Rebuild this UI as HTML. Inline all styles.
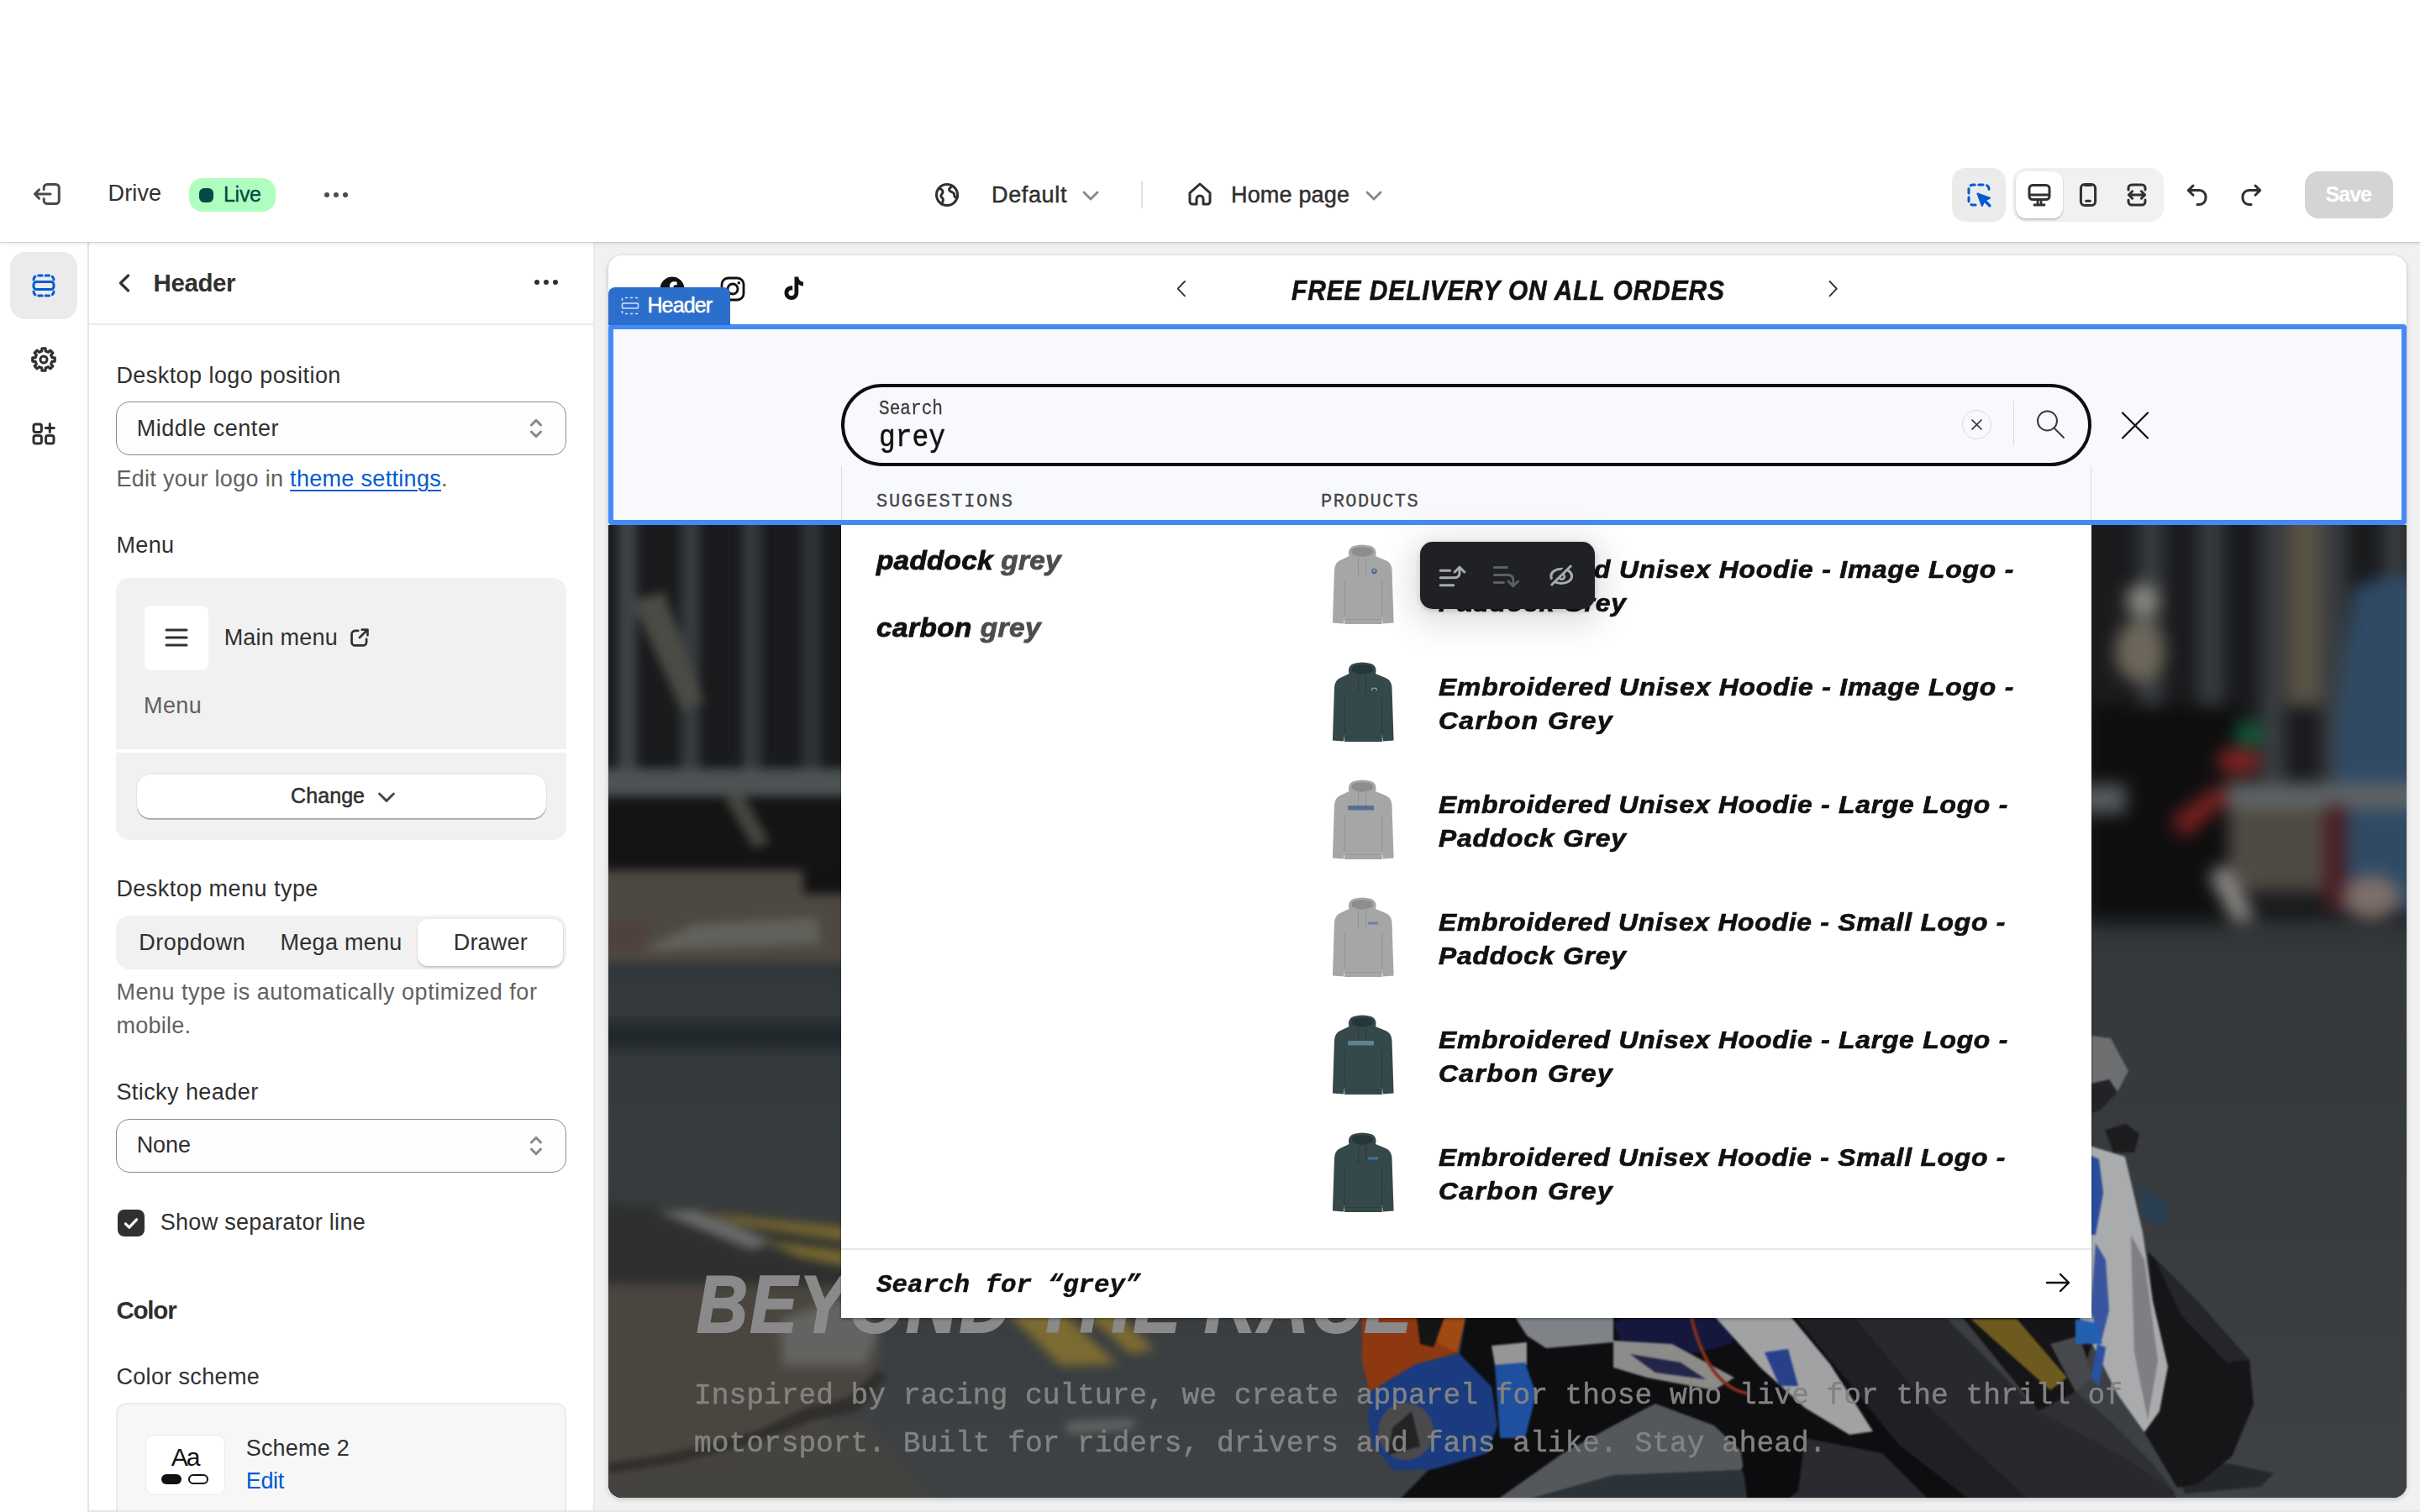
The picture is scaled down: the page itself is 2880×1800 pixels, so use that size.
<!DOCTYPE html>
<html lang="en"><head><meta charset="utf-8"><title>Header · Drive · Theme editor</title>
<style>
html,body{margin:0;padding:0}
body{width:2880px;height:1800px;position:relative;overflow:hidden;background:#fff;font-family:"Liberation Sans",sans-serif;color:#303030}
.t{position:absolute;white-space:nowrap;display:block}
div{box-sizing:border-box}
</style></head><body>
<div style="position:absolute;left:708px;top:288px;width:2172px;height:1512px;background:#f1f1f1;"></div>
<div style="position:absolute;left:0px;top:0px;width:2880px;height:288px;background:#fff;box-shadow:0 2px 4px rgba(0,0,0,.11), 0 1px 0 rgba(0,0,0,.09);z-index:5;"></div>
<div style="position:absolute;left:0;top:0;width:2880px;height:288px;z-index:6"><svg style="position:absolute;left:36px;top:211px;" width="40" height="40" viewBox="0 0 20 20" fill="none"><path d="M8.100 7.200V6.250a2 2 0 0 1 2-2h5.050a2 2 0 0 1 2 2v7.500a2 2 0 0 1-2 2H10.100a2 2 0 0 1-2-2v-.950" stroke="#4a4a4a" stroke-width="1.500" stroke-linecap="round"/><path d="M12 10H2.900M5.300 7.400 2.700 10l2.600 2.600" stroke="#4a4a4a" stroke-width="1.500" stroke-linecap="round" stroke-linejoin="round"/></svg>
<span class="t" style="left:128.6px;top:216.9px;font-size:27px;line-height:27px;color:#303030;letter-spacing:0.10px;">Drive</span>
<div style="position:absolute;left:225px;top:212px;width:103px;height:40px;background:#affebf;border-radius:16px;"></div>
<div style="position:absolute;left:237px;top:223.5px;width:17px;height:17px;background:#014b40;border-radius:6px;"></div>
<span class="t" style="left:266.0px;top:218.6px;font-size:25px;line-height:25px;color:#014b40;letter-spacing:-0.29px;-webkit-text-stroke:0.3px #014b40;">Live</span>
<div style="position:absolute;left:385.8px;top:228.8px;width:6px;height:6px;background:#4a4a4a;border-radius:50%;"></div>
<div style="position:absolute;left:396.8px;top:228.8px;width:6px;height:6px;background:#4a4a4a;border-radius:50%;"></div>
<div style="position:absolute;left:407.8px;top:228.8px;width:6px;height:6px;background:#4a4a4a;border-radius:50%;"></div>
<svg style="position:absolute;left:1107px;top:212px;" width="40" height="40" viewBox="0 0 20 20" fill="none"><circle cx="10" cy="10" r="6.25" stroke="#303030" stroke-width="1.5"/><path d="M5.2 6.2c1 .2 2.300.9 2.300 2 0 1.200-1.100 1.300-1.100 2.400 0 1 1.300 1.200 1.300 2.300 0 .9-.5 1.700-.9 2.600M13.200 4.700c-.7.800-1.900 1.100-1.900 2.200 0 1.300 1.800 1.100 2.600 2 .7.800.1 1.900 1 2.400.5.300 1 .2 1.300 0" stroke="#303030" stroke-width="1.5" stroke-linecap="round" stroke-linejoin="round"/></svg>
<span class="t" style="left:1180.0px;top:218.9px;font-size:27px;line-height:27px;color:#303030;letter-spacing:0.64px;-webkit-text-stroke:0.5px #303030;">Default</span>
<svg style="position:absolute;left:1278px;top:212px;" width="40" height="40" viewBox="0 0 20 20" fill="none"><path d="M6 8.500l4 4 4-4" stroke="#8a8a8a" stroke-width="1.500" stroke-linecap="round" stroke-linejoin="round"/></svg>
<div style="position:absolute;left:1358px;top:216px;width:2px;height:32px;background:#e3e3e3;"></div>
<svg style="position:absolute;left:1408px;top:211px;" width="40" height="40" viewBox="0 0 20 20" fill="none"><path d="M4 9.300 10 4l6 5.300v5.200a1.500 1.500 0 0 1-1.500 1.500H12v-3a2 2 0 0 0-4 0v3H5.500A1.500 1.500 0 0 1 4 14.500z" stroke="#303030" stroke-width="1.500" stroke-linejoin="round"/></svg>
<span class="t" style="left:1465.0px;top:218.9px;font-size:27px;line-height:27px;color:#303030;letter-spacing:0.18px;-webkit-text-stroke:0.5px #303030;">Home page</span>
<svg style="position:absolute;left:1615px;top:212px;" width="40" height="40" viewBox="0 0 20 20" fill="none"><path d="M6 8.500l4 4 4-4" stroke="#8a8a8a" stroke-width="1.500" stroke-linecap="round" stroke-linejoin="round"/></svg>
<div style="position:absolute;left:2323px;top:200px;width:64px;height:64px;background:#ebebeb;border-radius:16px;"></div>
<svg style="position:absolute;left:2335px;top:212px;" width="40" height="40" viewBox="0 0 20 20" fill="none"><path d="M8 16H6.500A2.500 2.500 0 0 1 4 13.500V6.500A2.500 2.500 0 0 1 6.500 4h7A2.500 2.500 0 0 1 16 6.500V8" stroke="#005bd3" stroke-width="1.500" stroke-linecap="round" stroke-dasharray="2.600 2.300"/><path d="M9.200 9.200l7.300 2.700-3.100 1.500-1.500 3.100z" fill="#005bd3" stroke="#005bd3" stroke-width="1" stroke-linejoin="round"/><path d="M13.400 13.400l3 3" stroke="#005bd3" stroke-width="1.800" stroke-linecap="round"/></svg>
<div style="position:absolute;left:2395px;top:200px;width:180px;height:64px;background:#f1f1f1;border-radius:16px;"></div>
<div style="position:absolute;left:2399px;top:204px;width:56px;height:56px;background:#fff;border-radius:12px;box-shadow:0 2px 2px rgba(0,0,0,.18),0 0 0 1px rgba(0,0,0,.03);"></div>
<svg style="position:absolute;left:2407px;top:212px;" width="40" height="40" viewBox="0 0 20 20" fill="none"><rect x="4" y="4.250" width="12" height="8.500" rx="2" stroke="#303030" stroke-width="1.500"/><path d="M4.300 10h11.400M7 16h6M9 13v3M11 13v3" stroke="#303030" stroke-width="1.400" stroke-linecap="round"/></svg>
<svg style="position:absolute;left:2465px;top:212px;" width="40" height="40" viewBox="0 0 20 20" fill="none"><rect x="5.700" y="3.750" width="8.600" height="12.500" rx="2.200" stroke="#303030" stroke-width="1.500"/><path d="M8.800 13.600h2.400M8.300 4.300h3.400" stroke="#303030" stroke-width="1.500" stroke-linecap="round"/></svg>
<svg style="position:absolute;left:2523px;top:212px;" width="40" height="40" viewBox="0 0 20 20" fill="none"><path d="M5 7V6a2 2 0 0 1 2-2h6a2 2 0 0 1 2 2v1M5 13v1a2 2 0 0 0 2 2h6a2 2 0 0 0 2-2v-1" stroke="#303030" stroke-width="1.500" stroke-linecap="round"/><path d="M5.200 10h9.600M7.300 7.900 5.200 10l2.100 2.100M12.700 7.900l2.100 2.100-2.100 2.100" stroke="#303030" stroke-width="1.500" stroke-linecap="round" stroke-linejoin="round"/></svg>
<svg style="position:absolute;left:2595px;top:212px;" width="40" height="40" viewBox="0 0 20 20" fill="none"><path d="M7.500 4.500 4.700 7.300l2.800 2.800" stroke="#303030" stroke-width="1.500" stroke-linecap="round" stroke-linejoin="round"/><path d="M5 7.300h6.300a3.700 3.700 0 0 1 3.700 3.700v1a3.700 3.700 0 0 1-3.700 3.700h-1.300" stroke="#303030" stroke-width="1.500" stroke-linecap="round"/></svg>
<svg style="position:absolute;left:2659px;top:212px;" width="40" height="40" viewBox="0 0 20 20" fill="none"><path d="M12.500 4.500l2.800 2.800-2.800 2.800" stroke="#303030" stroke-width="1.500" stroke-linecap="round" stroke-linejoin="round"/><path d="M15 7.300H8.700a3.700 3.700 0 0 0-3.700 3.700v1a3.700 3.700 0 0 0 3.700 3.700h1.300" stroke="#303030" stroke-width="1.500" stroke-linecap="round"/></svg>
<div style="position:absolute;left:2743px;top:204px;width:105px;height:56px;background:#d4d4d4;border-radius:16px;"></div>
<span class="t" style="left:2767.6px;top:218.6px;font-size:25px;line-height:25px;color:#fff;font-weight:700;letter-spacing:-1.00px;">Save</span>
</div>
<div style="position:absolute;left:0px;top:288px;width:106px;height:1512px;background:#fff;border-right:2px solid #e6e6e6;"></div>
<div style="position:absolute;left:12px;top:300px;width:80px;height:80px;background:#ebebeb;border-radius:18px;"></div>
<svg style="position:absolute;left:32px;top:320px;" width="40" height="40" viewBox="0 0 20 20" fill="none"><rect x="4" y="7.750" width="12" height="4.500" rx="1.600" stroke="#005bd3" stroke-width="1.500"/><path d="M4 6.500A2.500 2.500 0 0 1 6.500 4h7A2.500 2.500 0 0 1 16 6.500M4 13.500A2.500 2.500 0 0 0 6.500 16h7a2.500 2.500 0 0 0 2.500-2.500" stroke="#005bd3" stroke-width="1.500" stroke-linecap="round" stroke-dasharray="2.200 2"/></svg>
<svg style="position:absolute;left:32px;top:408px;" width="40" height="40" viewBox="0 0 20 20" fill="none"><path d="M8.95 3.38 L11.05 3.38 L11.15 5.03 L12.70 5.67 L13.94 4.58 L15.42 6.06 L14.33 7.30 L14.97 8.85 L16.62 8.95 L16.62 11.05 L14.97 11.15 L14.33 12.70 L15.42 13.94 L13.94 15.42 L12.70 14.33 L11.15 14.97 L11.05 16.62 L8.95 16.62 L8.85 14.97 L7.30 14.33 L6.06 15.42 L4.58 13.94 L5.67 12.70 L5.03 11.15 L3.38 11.05 L3.38 8.95 L5.03 8.85 L5.67 7.30 L4.58 6.06 L6.06 4.58 L7.30 5.67 L8.85 5.03Z" stroke="#303030" stroke-width="1.600" stroke-linejoin="round"/><circle cx="10" cy="10" r="2" stroke="#303030" stroke-width="1.500"/></svg>
<svg style="position:absolute;left:32px;top:496px;" width="40" height="40" viewBox="0 0 20 20" fill="none"><rect x="4" y="4.500" width="4.700" height="4.700" rx="1.200" stroke="#303030" stroke-width="1.500"/><rect x="4" y="11.300" width="4.700" height="4.700" rx="1.200" stroke="#303030" stroke-width="1.500"/><rect x="11.300" y="11.300" width="4.700" height="4.700" rx="1.200" stroke="#303030" stroke-width="1.500"/><path d="M13.650 4.300v5M11.150 6.800h5" stroke="#303030" stroke-width="1.500" stroke-linecap="round"/></svg>
<div style="position:absolute;left:106px;top:288px;width:602px;height:1512px;background:#fff;border-right:2px solid #e9e9e9;"></div>
<div style="position:absolute;left:106px;top:385px;width:600px;height:2px;background:#ebebeb;"></div>
<svg style="position:absolute;left:128px;top:317px;" width="40" height="40" viewBox="0 0 20 20" fill="none"><path d="M12.300 5.500 7.700 10l4.600 4.500" stroke="#303030" stroke-width="1.600" stroke-linecap="round" stroke-linejoin="round"/></svg>
<span class="t" style="left:182.5px;top:322.0px;font-size:29.5px;line-height:29.5px;color:#303030;font-weight:700;letter-spacing:-0.40px;">Header</span>
<div style="position:absolute;left:636px;top:333px;width:6px;height:6px;background:#303030;border-radius:50%;"></div>
<div style="position:absolute;left:647px;top:333px;width:6px;height:6px;background:#303030;border-radius:50%;"></div>
<div style="position:absolute;left:658px;top:333px;width:6px;height:6px;background:#303030;border-radius:50%;"></div>
<span class="t" style="left:138.4px;top:433.9px;font-size:27px;line-height:27px;color:#303030;letter-spacing:0.44px;">Desktop logo position</span>
<div style="position:absolute;left:138px;top:478px;width:536px;height:64px;background:#fdfdfd;border:1.500px solid #8a8a8a;border-radius:16px;"></div>
<span class="t" style="left:162.7px;top:496.9px;font-size:27px;line-height:27px;color:#303030;letter-spacing:0.56px;">Middle center</span>
<svg style="position:absolute;left:618px;top:490px;" width="40" height="40" viewBox="0 0 20 20" fill="none"><path d="M7.200 8 10 5.200 12.800 8M7.200 12l2.800 2.800L12.800 12" stroke="#8a8a8a" stroke-width="1.500" stroke-linecap="round" stroke-linejoin="round"/></svg>
<span class="t" style="left:138.4px;top:556.9px;font-size:27px;line-height:27px;color:#616161;letter-spacing:0.31px;">Edit your logo in <span style="color:#005bd3;text-decoration:underline;text-decoration-thickness:2px;text-underline-offset:4px">theme settings</span>.</span>
<span class="t" style="left:138.4px;top:635.9px;font-size:27px;line-height:27px;color:#303030;letter-spacing:0.39px;">Menu</span>
<div style="position:absolute;left:138px;top:688px;width:536px;height:312px;background:#f1f1f1;border-radius:16px;"></div>
<div style="position:absolute;left:138px;top:892px;width:536px;height:4px;background:#fff;"></div>
<div style="position:absolute;left:172px;top:721px;width:76px;height:77px;background:#fff;border-radius:8px;"></div>
<svg style="position:absolute;left:190px;top:739px;" width="40" height="40" viewBox="0 0 20 20" fill="none"><path d="M4 5.500h12M4 10h12M4 14.500h12" stroke="#303030" stroke-width="1.500" stroke-linecap="round"/></svg>
<span class="t" style="left:266.7px;top:746.4px;font-size:27px;line-height:27px;color:#303030;letter-spacing:0.18px;">Main menu</span>
<svg style="position:absolute;left:410px;top:741px;" width="36" height="36" viewBox="0 0 20 20" fill="none"><path d="M9 5.500H7A2.250 2.250 0 0 0 4.750 7.750V13A2.250 2.250 0 0 0 7 15.250h5.250A2.250 2.250 0 0 0 14.500 13v-2" stroke="#303030" stroke-width="1.500" stroke-linecap="round"/><path d="M11.500 4.750h3.750V8.500M15 5l-5 5" stroke="#303030" stroke-width="1.500" stroke-linecap="round" stroke-linejoin="round"/></svg>
<span class="t" style="left:171.0px;top:827.2px;font-size:27px;line-height:27px;color:#616161;letter-spacing:0.39px;">Menu</span>
<div style="position:absolute;left:163px;top:922px;width:487px;height:52px;background:#fff;border-radius:16px;box-shadow:0 2px 0 0 rgba(0,0,0,.25),0 0 0 1px rgba(0,0,0,.05);"></div>
<span class="t" style="left:346.0px;top:934.6px;font-size:25px;line-height:25px;color:#303030;letter-spacing:0.09px;-webkit-text-stroke:0.5px #303030;">Change</span>
<svg style="position:absolute;left:439.5px;top:928px;" width="40" height="40" viewBox="0 0 20 20" fill="none"><path d="M5.800 8.500l4.200 4.200 4.200-4.200" stroke="#4a4a4a" stroke-width="1.500" stroke-linecap="round" stroke-linejoin="round"/></svg>
<span class="t" style="left:138.4px;top:1044.9px;font-size:27px;line-height:27px;color:#303030;letter-spacing:0.46px;">Desktop menu type</span>
<div style="position:absolute;left:138px;top:1090px;width:536px;height:64px;background:#f1f1f1;border-radius:16px;"></div>
<div style="position:absolute;left:497px;top:1094px;width:173px;height:56px;background:#fff;border-radius:12px;box-shadow:0 2px 2px rgba(0,0,0,.16),0 0 0 1px rgba(0,0,0,.03);"></div>
<span class="t" style="left:165.3px;top:1109.2px;font-size:27px;line-height:27px;color:#303030;letter-spacing:0.49px;">Dropdown</span>
<span class="t" style="left:333.6px;top:1109.2px;font-size:27px;line-height:27px;color:#303030;letter-spacing:0.26px;">Mega menu</span>
<span class="t" style="left:539.7px;top:1109.2px;font-size:27px;line-height:27px;color:#303030;letter-spacing:0.20px;">Drawer</span>
<span class="t" style="left:138.4px;top:1168.2px;font-size:27px;line-height:27px;color:#616161;letter-spacing:0.52px;">Menu type is automatically optimized for</span>
<span class="t" style="left:138.4px;top:1208.4px;font-size:27px;line-height:27px;color:#616161;letter-spacing:0.26px;">mobile.</span>
<span class="t" style="left:138.4px;top:1287.2px;font-size:27px;line-height:27px;color:#303030;letter-spacing:0.43px;">Sticky header</span>
<div style="position:absolute;left:138px;top:1332px;width:536px;height:64px;background:#fdfdfd;border:1.500px solid #8a8a8a;border-radius:16px;"></div>
<span class="t" style="left:162.7px;top:1350.2px;font-size:27px;line-height:27px;color:#303030;letter-spacing:-0.08px;">None</span>
<svg style="position:absolute;left:618px;top:1344px;" width="40" height="40" viewBox="0 0 20 20" fill="none"><path d="M7.200 8 10 5.200 12.800 8M7.200 12l2.800 2.800L12.800 12" stroke="#8a8a8a" stroke-width="1.500" stroke-linecap="round" stroke-linejoin="round"/></svg>
<div style="position:absolute;left:140px;top:1440px;width:32px;height:32px;background:#303030;border-radius:8px;"></div>
<svg style="position:absolute;left:140px;top:1440px;" width="32" height="32" viewBox="0 0 16 16" fill="none"><path d="M4.700 8.400l2.200 2.200 4.400-4.700" stroke="#fff" stroke-width="1.600" stroke-linecap="round" stroke-linejoin="round"/></svg>
<span class="t" style="left:190.7px;top:1441.9px;font-size:27px;line-height:27px;color:#303030;letter-spacing:0.30px;">Show separator line</span>
<span class="t" style="left:138.4px;top:1544.7px;font-size:29.5px;line-height:29.5px;color:#303030;font-weight:700;letter-spacing:-1.18px;">Color</span>
<span class="t" style="left:138.4px;top:1625.9px;font-size:27px;line-height:27px;color:#303030;letter-spacing:0.35px;">Color scheme</span>
<div style="position:absolute;left:138px;top:1670px;width:536px;height:140px;background:#f7f7f7;border:2px solid #ebebeb;border-radius:12px;"></div>
<div style="position:absolute;left:174px;top:1709px;width:93px;height:70px;background:#fff;border-radius:9px;box-shadow:0 0 0 1px #ebebeb;"></div>
<span class="t" style="left:203.8px;top:1719.8px;font-size:30px;line-height:30px;color:#111;letter-spacing:-2.09px;">Aa</span>
<div style="position:absolute;left:192px;top:1755px;width:24px;height:12px;background:#111;border-radius:6px;"></div>
<div style="position:absolute;left:224px;top:1755px;width:24px;height:12px;background:#fff;border:2px solid #111;border-radius:6px;"></div>
<span class="t" style="left:292.7px;top:1710.5px;font-size:27px;line-height:27px;color:#303030;letter-spacing:0.20px;">Scheme 2</span>
<span class="t" style="left:292.7px;top:1750.3px;font-size:27px;line-height:27px;color:#005bd3;letter-spacing:-0.31px;">Edit</span>
<div style="position:absolute;left:106px;top:1797.5px;width:2774px;height:2.5px;background:#e6e6e6;"></div>
<div style="position:absolute;left:724px;top:304px;width:2140px;height:1479px;background:#fff;border-radius:16px;overflow:hidden;box-shadow:0 2px 6px rgba(0,0,0,.18),0 0 3px rgba(0,0,0,.06);"><svg style="position:absolute;left:61px;top:25px;" width="30" height="30" viewBox="0 0 30 30" fill="none"><circle cx="15" cy="15" r="14.500" fill="#111"/><path d="M19.800 19.400l.650-4.200h-4v-2.700c0-1.150.560-2.270 2.370-2.270h1.830V6.650s-1.660-.280-3.250-.280c-3.320 0-5.480 2-5.480 5.650v3.200H8.200v4.200h3.700v10h4.550v-10z" fill="#fff"/></svg>
<svg style="position:absolute;left:133px;top:25px;" width="30" height="30" viewBox="0 0 30 30" fill="none"><rect x="2" y="2" width="26" height="26" rx="7.500" stroke="#111" stroke-width="2.800"/><circle cx="15" cy="15" r="6" stroke="#111" stroke-width="2.800"/><circle cx="22.300" cy="7.700" r="1.800" fill="#111"/></svg>
<svg style="position:absolute;left:206px;top:24px;" width="30" height="32" viewBox="0 0 30 32" fill="none"><path d="M15.500 1.500h4.700c.2 3.300 2.300 5.900 5.800 6.300v4.700c-2.200 0-4.200-.7-5.800-1.900v9.900c0 5.200-3.900 8.500-8.300 8.500-4.900 0-8.400-3.900-8.400-8.300 0-5.300 4.600-9.100 9.700-8.200v4.900c-2.500-.8-4.900 1-4.900 3.400 0 2 1.600 3.500 3.500 3.500 2.200 0 3.700-1.700 3.700-3.800z" fill="#111"/></svg>
<svg style="position:absolute;left:672px;top:28px;" width="20" height="24" viewBox="0 0 20 24" fill="none"><path d="M14 3 5.700 11.700l8.300 8.700" stroke="#333" stroke-width="1.900" stroke-linecap="round" stroke-linejoin="round"/></svg>
<svg style="position:absolute;left:1447px;top:28px;" width="20" height="24" viewBox="0 0 20 24" fill="none"><path d="M6.500 3l8.300 8.700-8.300 8.700" stroke="#333" stroke-width="1.900" stroke-linecap="round" stroke-linejoin="round"/></svg>
<span class="t" style="left:813.0px;top:24.2px;font-size:34px;line-height:34px;color:#111;font-weight:700;font-style:italic;letter-spacing:1.05px;-webkit-text-stroke:0.6px #111;transform:scaleX(0.88);transform-origin:0 0;">FREE DELIVERY ON ALL ORDERS</span>
<div style="position:absolute;left:0px;top:82px;width:2140px;height:239px;background:#f8f9fc;"></div>
<div style="position:absolute;left:0px;top:321px;width:2140px;height:1158px;overflow:hidden;background:#222;"><svg style="position:absolute;left:0;top:0" width="2140" height="1158" viewBox="0 0 2140 1158"><defs>
<filter id="b10" color-interpolation-filters="sRGB" x="-30%" y="-30%" width="160%" height="160%"><feGaussianBlur stdDeviation="10"/></filter>
<filter id="b6" color-interpolation-filters="sRGB" x="-30%" y="-30%" width="160%" height="160%"><feGaussianBlur stdDeviation="6"/></filter>
<filter id="b3" color-interpolation-filters="sRGB" x="-30%" y="-30%" width="160%" height="160%"><feGaussianBlur stdDeviation="3"/></filter>
<filter id="b1" color-interpolation-filters="sRGB" x="-10%" y="-10%" width="120%" height="120%"><feGaussianBlur stdDeviation="1.200"/></filter>
<linearGradient id="road" x1="0" y1="0" x2="0" y2="1"><stop offset="0" stop-color="#33383a"/><stop offset=".45" stop-color="#383c3e"/><stop offset="1" stop-color="#404446"/></linearGradient>
</defs><rect width="2140" height="1158" fill="#1a1b1d"/><g filter="url(#b6)"><rect x="-100" y="475" width="2340" height="800" fill="url(#road)" /></g><g filter="url(#b6)"><rect x="11" y="-25" width="23" height="318" fill="#3d4245" /><rect x="86" y="-25" width="23" height="318" fill="#363b3e" /><rect x="159" y="-25" width="23" height="318" fill="#34393c" /><rect x="230" y="-25" width="23" height="318" fill="#2f3338" /><polygon points="28,90 66,80 114,210 88,223" fill="#4a4b45" /><rect x="-24" y="290" width="320" height="33" fill="#4d5254" /><rect x="-24" y="323" width="320" height="90" fill="#141414" /><polygon points="138,325 161,321 192,378 173,385" fill="#45453f" /><rect x="-24" y="411" width="320" height="110" fill="#4d4840" /><rect x="232" y="405" width="60" height="34" fill="#131313" /><polygon points="103,475 248,467 252,499 36,507" fill="#61615b" /><rect x="-24" y="471" width="70" height="36" fill="#4f423c" /><rect x="-24" y="521" width="340" height="20" fill="#30363a" /></g><g filter="url(#b10)"><rect x="-34" y="593" width="360" height="30" fill="#1f262a" /></g><g filter="url(#b6)"><polygon points="-24,807 76,811 296,837 336,915 -24,915" fill="#2d302f" /><polygon points="-24,903 274,906 325,981 321,1013 266,1065 202,1090 276,1175 -24,1175" fill="#4a463f" /><polygon points="-24,1135 136,1105 236,1075 306,1065 396,1175 -24,1175" fill="#45433f" /><polygon points="56,816 106,816 196,853 171,863" fill="#6a6a6a" /><polygon points="116,819 286,837 286,853 156,833" fill="#7a6a30" /><polygon points="181,851 286,865 286,883 226,871" fill="#7a6a30" /><polygon points="204,947 276,921 322,961 306,1001 208,1001" fill="#636361" /><polygon points="472,935 538,935 606,999 538,1001" fill="#7c6b32" /><polygon points="562,935 602,935 650,981 622,987" fill="#7c6b32" /><polygon points="546,1069 626,1065 626,1075 546,1081" fill="#6a6c6c" /></g><g filter="url(#b3)"><polygon points="0,1117 76,1105 176,1079 236,1051 286,1039 322,1005 332,1015 296,1055 241,1067 181,1091 76,1118 0,1129" fill="#302f2c" /></g><g filter="url(#b10)"><rect x="1822" y="-25" width="28" height="330" fill="#3a3e41" /><rect x="1893" y="-25" width="28" height="330" fill="#3a3e41" /><rect x="1967" y="-25" width="28" height="330" fill="#3a3e41" /><rect x="2039" y="-25" width="28" height="330" fill="#3a3e41" /><rect x="2113" y="-25" width="28" height="330" fill="#3a3e41" /><rect x="1998" y="-25" width="40" height="240" fill="#5a5446" /><ellipse cx="1826" cy="90" rx="20" ry="20" fill="#85877f" /><ellipse cx="1823" cy="150" rx="30" ry="38" fill="#6d675b" /><polygon points="2076,75 2116,60 2156,65 2156,460 2051,460 2056,235" fill="#304a64" /><rect x="1765" y="215" width="176" height="258" fill="#0e0e0f" /><rect x="1928" y="338" width="123" height="98" fill="#4f4a42" /><rect x="1924" y="307" width="240" height="31" fill="#5f6466" /><rect x="1746" y="309" width="60" height="34" fill="#585c5e" /><ellipse cx="1952" cy="249" rx="17" ry="15" fill="#0f5a3a" /><ellipse cx="1940" cy="281" rx="26" ry="17" fill="#7c2222" /><polygon points="1859,350 1916,309 1931,325 1876,373" fill="#782020" /><rect x="2043" y="334" width="25" height="123" fill="#4a1c20" /><polygon points="1904,415 1926,405 1959,467 1938,479" fill="#8d8b88" /><ellipse cx="2098" cy="443" rx="34" ry="26" fill="#7d6e68" /><rect x="1746" y="471" width="420" height="14" fill="#2c3032" /></g><g filter="url(#b1)"><polygon points="1866,1127 1926,1117 1982,1129 1966,1145 1876,1153" fill="#25282a" /><polygon points="1403,935 1583,935 1702,1055 1796,1105 1863,1150 1868,1165 1626,1165 1530,1107 1476,1047" fill="#28292d" /><polygon points="1403,935 1476,935 1576,1055 1696,1165 1626,1165 1530,1107 1476,1047" fill="#1f2024" /><polygon points="1605,935 1755,935 1766,975 1746,1032 1702,1055" fill="#151518" /><polygon points="1621,945 1676,945 1736,1015 1716,1030" fill="#6d5a1e" /><polygon points="1702,1055 1746,1032 1786,1065 1836,1115 1863,1150 1796,1105" fill="#2e3036" /><polygon points="1716,975 1751,965 1766,1015 1746,1032" fill="#47484b" /><polygon points="1832,865 1891,924 1953,994 1958,1047 1932,1109 1891,1142 1867,1146 1828,1080 1856,1002 1838,924" fill="#161618" /><polygon points="1842,877 1891,924 1953,994 1926,997 1872,941" fill="#25262c" /><polygon points="1822,787 1859,811 1850,835 1824,823" fill="#2b3f52" /><polygon points="1765,608 1788,611 1809,650 1796,675 1776,697 1765,700" fill="#6c6e70" /><polygon points="1765,665 1786,660 1796,675 1776,697 1765,700" fill="#222326" /><polygon points="1781,720 1806,713 1822,725 1816,747 1791,747" fill="#1c1c1f" /><polygon points="1756,737 1805,752 1826,842 1838,924 1856,1002 1846,1055 1828,1080 1796,1035 1766,975 1751,945 1751,737" fill="#a9abad" /><polygon points="1756,747 1774,755 1779,795 1770,845 1756,845" fill="#2a4c9c" /><polygon points="1770,855 1782,875 1786,935 1776,975 1764,935" fill="#3a55a0" /><polygon points="1746,945 1771,950 1778,975 1746,975" fill="#2260b0" /><polygon points="1772,975 1782,979 1774,1025 1764,1015" fill="#2a50a0" /><polygon points="1812,845 1828,875 1844,995 1832,1065 1816,985" fill="#7e7f82" /><polygon points="998,935 1406,935 1536,1095 1626,1165 937,1165 976,1125 1046,1105 1058,1072 1051,1026 1013,987 1022,935" fill="#0e0e11" /><polygon points="1051,1165 1136,1105 1196,1072 1246,1046 1316,1072 1356,1110 1348,1125 1196,1133 1076,1165" fill="#54585a" /><polygon points="1076,1165 1196,1131 1348,1125 1386,1165" fill="#2b3238" /><polygon points="1348,1103 1424,1110 1416,1150 1396,1165 1356,1165" fill="#0c0c0e" /><polygon points="1424,1087 1516,1105 1576,1165 1396,1165 1416,1150" fill="#292b30" /><polygon points="1196,950 1226,935 1348,935 1336,975 1286,987 1206,975" fill="#15183c" /><polygon points="1196,971 1266,975 1340,1015 1316,1030 1236,1015 1196,1003" fill="#8b8b89" /><polygon points="1216,987 1276,997 1306,1017 1246,1009" fill="#23264a" /><polygon points="1074,935 1196,935 1196,973 1116,980 1093,965" fill="#7f8287" /><polygon points="1051,977 1093,973 1093,1000 1056,1005" fill="#969696" /><polygon points="1310,935 1401,935 1454,999 1505,1079 1477,1083 1424,1051 1371,1003" fill="#a0a2a4" /><polygon points="1376,985 1404,981 1416,1025 1394,1025" fill="#2a3f8a" /><path d="M1287 935 Q1306 1025 1356 1034" stroke="#84301c" stroke-width="4" fill="none"/><polygon points="897,935 1022,935 1010,985 961,999 906,1032 897,996" fill="#8e3812" /><polygon points="976,935 1022,935 1010,985 988,975" fill="#a04a12" /><polygon points="961,935 998,935 982,979 966,975" fill="#151515" /><polygon points="906,1032 961,999 1013,987 1051,1026 1058,1072 1046,1105 982,1124 934,1125 910,1095 904,1065" fill="#1a3b80" /><polygon points="1055,1000 1091,997 1104,1035 1091,1087 1061,1087" fill="#1f4f9f" /><ellipse cx="949" cy="1079" rx="33" ry="34" fill="#4a4a4c" /><polygon points="933,1075 956,1055 966,1097 928,1107" fill="#242426" /></g></svg><span class="t" style="left:105.0px;top:880.1px;font-size:96px;line-height:96px;color:#8a8a8a;font-weight:700;font-style:italic;letter-spacing:2.78px;-webkit-text-stroke:2.2px #8a8a8a;transform:scaleX(0.88);transform-origin:0 0;">BEYOND THE RACE</span>
<span class="t" style="left:102.0px;top:1019.9px;font-size:35px;line-height:35px;color:#828282;font-family:'Liberation Mono',monospace;-webkit-text-stroke:0.5px #828282;transform:scaleX(0.9871);transform-origin:0 0;">Inspired by racing culture, we create apparel for those who live for the thrill of</span>
<span class="t" style="left:102.0px;top:1077.4px;font-size:35px;line-height:35px;color:#828282;font-family:'Liberation Mono',monospace;-webkit-text-stroke:0.5px #828282;transform:scaleX(0.987);transform-origin:0 0;">motorsport. Built for riders, drivers and fans alike. Stay ahead.</span>
</div>
<div style="position:absolute;left:277px;top:251px;width:1488px;height:70px;background:#f8f9fc;border-left:1.500px solid #dcdde0;border-right:1.500px solid #dcdde0;"></div>
<div style="position:absolute;left:277px;top:321px;width:1488px;height:944px;background:#fff;box-shadow:0 2px 3px rgba(0,0,0,.25);"></div>
<span class="t" style="left:319.0px;top:283.1px;font-size:22px;line-height:22px;color:#444;font-family:'Liberation Mono',monospace;letter-spacing:1.68px;-webkit-text-stroke:0.3px #444;">SUGGESTIONS</span>
<span class="t" style="left:848.0px;top:283.1px;font-size:22px;line-height:22px;color:#444;font-family:'Liberation Mono',monospace;letter-spacing:1.43px;-webkit-text-stroke:0.3px #444;">PRODUCTS</span>
<div style="position:absolute;left:0px;top:82px;width:2140px;height:239px;border:6px solid #4589f7;border-radius:4px;"></div>
<div style="position:absolute;left:277px;top:153px;width:1488px;height:98px;border:4.500px solid #0d0d12;border-radius:49px;background:#f8f9fc;"></div>
<span class="t" style="left:321.5px;top:171.6px;font-size:23px;line-height:23px;color:#3c3c3c;font-family:'Liberation Mono',monospace;-webkit-text-stroke:0.3px #3c3c3c;transform:scaleX(0.9177);transform-origin:0 0;">Search</span>
<span class="t" style="left:321.5px;top:199.6px;font-size:36px;line-height:36px;color:#111;font-family:'Liberation Mono',monospace;-webkit-text-stroke:0.5px #111;transform:scaleX(0.9142);transform-origin:0 0;">grey</span>
<div style="position:absolute;left:1611px;top:183.5px;width:35px;height:35px;border:1.500px solid #d9d9dc;border-radius:50%;"></div>
<svg style="position:absolute;left:1619px;top:191.5px;" width="19" height="19" viewBox="0 0 19 19" fill="none"><path d="M4 4l11 11M15 4 4 15" stroke="#333" stroke-width="1.700" stroke-linecap="round"/></svg>
<div style="position:absolute;left:1671.5px;top:174px;width:1.5px;height:53px;background:#dcdde0;"></div>
<svg style="position:absolute;left:1697px;top:182px;" width="40" height="40" viewBox="0 0 40 40" fill="none"><circle cx="15.500" cy="15" r="11.500" stroke="#3a3a3a" stroke-width="2"/><path d="M24 24l11 11" stroke="#3a3a3a" stroke-width="2" stroke-linecap="round"/></svg>
<svg style="position:absolute;left:1798px;top:184px;" width="38" height="38" viewBox="0 0 38 38" fill="none"><path d="M4 3.500l30 30M34 3.500l-30 30" stroke="#111" stroke-width="2.200" stroke-linecap="round"/></svg>
<span class="t" style="left:318.5px;top:346.7px;font-size:32px;line-height:32px;color:#111;font-weight:700;font-style:italic;letter-spacing:0.27px;-webkit-text-stroke:0.9px #111;transform:scaleX(1.04);transform-origin:0 0;">paddock <span style="color:#4d4d4d;-webkit-text-stroke-color:#4d4d4d">grey</span></span>
<span class="t" style="left:318.5px;top:426.7px;font-size:32px;line-height:32px;color:#111;font-weight:700;font-style:italic;letter-spacing:0.47px;-webkit-text-stroke:0.9px #111;transform:scaleX(1.04);transform-origin:0 0;">carbon <span style="color:#4d4d4d;-webkit-text-stroke-color:#4d4d4d">grey</span></span>
<svg style="position:absolute;left:861px;top:343.5px;" width="74" height="96" viewBox="0 0 74 96" fill="none"><path d="M20.500 14 Q18 5 26 2 Q36 -1 46.500 2 Q54.500 5 52 14 L64 19 Q71 22 71.500 30 L73.600 93.500 L60.700 94.500 L59.800 86 L59.800 95 L15.100 95 L15.100 86 L14.200 94.500 L.900 93.500 L3 30 Q3.500 22 10 19Z" fill="#a6a6a6"/>
<path d="M24 11 Q22 6 28 4.200 Q36 2.500 44.500 4.200 Q50.500 6 48.500 11 Q36 18.500 24 11Z" fill="#8d8d8d"/>
<path d="M15.100 86 V42 M59.800 86 V42 M31.500 15.500 V37 M40.500 15.500 V37" stroke="#8d8d8d" stroke-width="1.100" fill="none" opacity=".75"/><path d="M15.100 89.500 H59.800" stroke="#8d8d8d" stroke-width="1" opacity=".6"/><circle cx="50.500" cy="32" r="3.200" fill="#4a6590"/><circle cx="50.500" cy="31.500" r="1.400" fill="#a6a6a6"/></svg>
<span class="t" style="left:987.7px;top:358.6px;font-size:30px;line-height:30px;color:#111;font-weight:700;font-style:italic;letter-spacing:0.78px;-webkit-text-stroke:0.7px #111;transform:scaleX(1.06);transform-origin:0 0;">Embroidered Unisex Hoodie - Image Logo -</span>
<span class="t" style="left:987.7px;top:398.6px;font-size:30px;line-height:30px;color:#111;font-weight:700;font-style:italic;letter-spacing:0.78px;-webkit-text-stroke:0.7px #111;transform:scaleX(1.06);transform-origin:0 0;">Paddock Grey</span>
<svg style="position:absolute;left:861px;top:483.5px;" width="74" height="96" viewBox="0 0 74 96" fill="none"><path d="M20.500 14 Q18 5 26 2 Q36 -1 46.500 2 Q54.500 5 52 14 L64 19 Q71 22 71.500 30 L73.600 93.500 L60.700 94.500 L59.800 86 L59.800 95 L15.100 95 L15.100 86 L14.200 94.500 L.900 93.500 L3 30 Q3.500 22 10 19Z" fill="#35484a"/>
<path d="M24 11 Q22 6 28 4.200 Q36 2.500 44.500 4.200 Q50.500 6 48.500 11 Q36 18.500 24 11Z" fill="#26373a"/>
<path d="M15.100 86 V42 M59.800 86 V42 M31.500 15.500 V37 M40.500 15.500 V37" stroke="#26373a" stroke-width="1.100" fill="none" opacity=".75"/><path d="M15.100 89.500 H59.800" stroke="#26373a" stroke-width="1" opacity=".6"/><path d="M47.500 34a3 3 0 0 1 6 0" stroke="#9db3c0" stroke-width="1.200" fill="none"/></svg>
<span class="t" style="left:987.7px;top:498.6px;font-size:30px;line-height:30px;color:#111;font-weight:700;font-style:italic;letter-spacing:0.78px;-webkit-text-stroke:0.7px #111;transform:scaleX(1.06);transform-origin:0 0;">Embroidered Unisex Hoodie - Image Logo -</span>
<span class="t" style="left:987.7px;top:538.6px;font-size:30px;line-height:30px;color:#111;font-weight:700;font-style:italic;letter-spacing:1.32px;-webkit-text-stroke:0.7px #111;transform:scaleX(1.06);transform-origin:0 0;">Carbon Grey</span>
<svg style="position:absolute;left:861px;top:623.5px;" width="74" height="96" viewBox="0 0 74 96" fill="none"><path d="M20.500 14 Q18 5 26 2 Q36 -1 46.500 2 Q54.500 5 52 14 L64 19 Q71 22 71.500 30 L73.600 93.500 L60.700 94.500 L59.800 86 L59.800 95 L15.100 95 L15.100 86 L14.200 94.500 L.900 93.500 L3 30 Q3.500 22 10 19Z" fill="#a6a6a6"/>
<path d="M24 11 Q22 6 28 4.200 Q36 2.500 44.500 4.200 Q50.500 6 48.500 11 Q36 18.500 24 11Z" fill="#8d8d8d"/>
<path d="M15.100 86 V42 M59.800 86 V42 M31.500 15.500 V37 M40.500 15.500 V37" stroke="#8d8d8d" stroke-width="1.100" fill="none" opacity=".75"/><path d="M15.100 89.500 H59.800" stroke="#8d8d8d" stroke-width="1" opacity=".6"/><rect x="19" y="31" width="31" height="5.500" rx="1" fill="#4a6590" opacity=".85"/></svg>
<span class="t" style="left:987.7px;top:638.6px;font-size:30px;line-height:30px;color:#111;font-weight:700;font-style:italic;letter-spacing:0.74px;-webkit-text-stroke:0.7px #111;transform:scaleX(1.06);transform-origin:0 0;">Embroidered Unisex Hoodie - Large Logo -</span>
<span class="t" style="left:987.7px;top:678.6px;font-size:30px;line-height:30px;color:#111;font-weight:700;font-style:italic;letter-spacing:0.78px;-webkit-text-stroke:0.7px #111;transform:scaleX(1.06);transform-origin:0 0;">Paddock Grey</span>
<svg style="position:absolute;left:861px;top:763.5px;" width="74" height="96" viewBox="0 0 74 96" fill="none"><path d="M20.500 14 Q18 5 26 2 Q36 -1 46.500 2 Q54.500 5 52 14 L64 19 Q71 22 71.500 30 L73.600 93.500 L60.700 94.500 L59.800 86 L59.800 95 L15.100 95 L15.100 86 L14.200 94.500 L.900 93.500 L3 30 Q3.500 22 10 19Z" fill="#a6a6a6"/>
<path d="M24 11 Q22 6 28 4.200 Q36 2.500 44.500 4.200 Q50.500 6 48.500 11 Q36 18.500 24 11Z" fill="#8d8d8d"/>
<path d="M15.100 86 V42 M59.800 86 V42 M31.500 15.500 V37 M40.500 15.500 V37" stroke="#8d8d8d" stroke-width="1.100" fill="none" opacity=".75"/><path d="M15.100 89.500 H59.800" stroke="#8d8d8d" stroke-width="1" opacity=".6"/><rect x="43" y="29.500" width="12" height="3" fill="#5a78a8" opacity=".8"/></svg>
<span class="t" style="left:987.7px;top:778.6px;font-size:30px;line-height:30px;color:#111;font-weight:700;font-style:italic;letter-spacing:0.71px;-webkit-text-stroke:0.7px #111;transform:scaleX(1.06);transform-origin:0 0;">Embroidered Unisex Hoodie - Small Logo -</span>
<span class="t" style="left:987.7px;top:818.6px;font-size:30px;line-height:30px;color:#111;font-weight:700;font-style:italic;letter-spacing:0.78px;-webkit-text-stroke:0.7px #111;transform:scaleX(1.06);transform-origin:0 0;">Paddock Grey</span>
<svg style="position:absolute;left:861px;top:903.5px;" width="74" height="96" viewBox="0 0 74 96" fill="none"><path d="M20.500 14 Q18 5 26 2 Q36 -1 46.500 2 Q54.500 5 52 14 L64 19 Q71 22 71.500 30 L73.600 93.500 L60.700 94.500 L59.800 86 L59.800 95 L15.100 95 L15.100 86 L14.200 94.500 L.900 93.500 L3 30 Q3.500 22 10 19Z" fill="#35484a"/>
<path d="M24 11 Q22 6 28 4.200 Q36 2.500 44.500 4.200 Q50.500 6 48.500 11 Q36 18.500 24 11Z" fill="#26373a"/>
<path d="M15.100 86 V42 M59.800 86 V42 M31.500 15.500 V37 M40.500 15.500 V37" stroke="#26373a" stroke-width="1.100" fill="none" opacity=".75"/><path d="M15.100 89.500 H59.800" stroke="#26373a" stroke-width="1" opacity=".6"/><rect x="19" y="31" width="31" height="5.500" rx="1" fill="#6a8fa8" opacity=".8"/></svg>
<span class="t" style="left:987.7px;top:918.6px;font-size:30px;line-height:30px;color:#111;font-weight:700;font-style:italic;letter-spacing:0.74px;-webkit-text-stroke:0.7px #111;transform:scaleX(1.06);transform-origin:0 0;">Embroidered Unisex Hoodie - Large Logo -</span>
<span class="t" style="left:987.7px;top:958.6px;font-size:30px;line-height:30px;color:#111;font-weight:700;font-style:italic;letter-spacing:1.32px;-webkit-text-stroke:0.7px #111;transform:scaleX(1.06);transform-origin:0 0;">Carbon Grey</span>
<svg style="position:absolute;left:861px;top:1043.5px;" width="74" height="96" viewBox="0 0 74 96" fill="none"><path d="M20.500 14 Q18 5 26 2 Q36 -1 46.500 2 Q54.500 5 52 14 L64 19 Q71 22 71.500 30 L73.600 93.500 L60.700 94.500 L59.800 86 L59.800 95 L15.100 95 L15.100 86 L14.200 94.500 L.900 93.500 L3 30 Q3.500 22 10 19Z" fill="#35484a"/>
<path d="M24 11 Q22 6 28 4.200 Q36 2.500 44.500 4.200 Q50.500 6 48.500 11 Q36 18.500 24 11Z" fill="#26373a"/>
<path d="M15.100 86 V42 M59.800 86 V42 M31.500 15.500 V37 M40.500 15.500 V37" stroke="#26373a" stroke-width="1.100" fill="none" opacity=".75"/><path d="M15.100 89.500 H59.800" stroke="#26373a" stroke-width="1" opacity=".6"/><rect x="43" y="29.500" width="12" height="3" fill="#3f7fa8" opacity=".8"/></svg>
<span class="t" style="left:987.7px;top:1058.6px;font-size:30px;line-height:30px;color:#111;font-weight:700;font-style:italic;letter-spacing:0.71px;-webkit-text-stroke:0.7px #111;transform:scaleX(1.06);transform-origin:0 0;">Embroidered Unisex Hoodie - Small Logo -</span>
<span class="t" style="left:987.7px;top:1098.6px;font-size:30px;line-height:30px;color:#111;font-weight:700;font-style:italic;letter-spacing:1.32px;-webkit-text-stroke:0.7px #111;transform:scaleX(1.06);transform-origin:0 0;">Carbon Grey</span>
<div style="position:absolute;left:277px;top:1181.5px;width:1488px;height:2px;background:#e6e6e8;"></div>
<span class="t" style="left:319.3px;top:1211.0px;font-size:30px;line-height:30px;color:#111;font-family:'Liberation Mono',monospace;font-weight:700;font-style:italic;-webkit-text-stroke:0.4px #111;transform:scaleX(1.0276);transform-origin:0 0;">Search for “grey”</span>
<svg style="position:absolute;left:1709px;top:1209px;" width="32" height="28" viewBox="0 0 32 28" fill="none"><path d="M3 14h26M19 4l10 10-10 10" stroke="#111" stroke-width="2.400" stroke-linecap="round" stroke-linejoin="round"/></svg>
<div style="position:absolute;left:966px;top:341px;width:208px;height:79.5px;background:#202124;border-radius:15px;box-shadow:0 8px 40px 10px rgba(0,0,0,.13),0 2px 6px rgba(0,0,0,.2);"></div>
<svg style="position:absolute;left:984px;top:362px;" width="40" height="40" viewBox="0 0 20 20" fill="none"><path d="M3.100 6.600h5.700M3.100 15.400h7.800M3.100 10.900h8.400c2 0 3-1 3-3V4.800M11.600 7.500l2.900-2.900 2.900 2.900" stroke="#a8abaf" stroke-width="1.500" stroke-linecap="round" stroke-linejoin="round" fill="none"/></svg>
<svg style="position:absolute;left:1049px;top:362px;" width="40" height="40" viewBox="0 0 20 20" fill="none"><path d="M2.700 4.700h7.600M2.700 13.800h5.500M2.700 9.200h8.200c2 0 3 1 3 3v3.300M11 13l2.900 2.900 2.900-2.900" stroke="#5c5f63" stroke-width="1.500" stroke-linecap="round" stroke-linejoin="round" fill="none"/></svg>
<svg style="position:absolute;left:1114px;top:362px;" width="40" height="40" viewBox="0 0 20 20" fill="none"><ellipse cx="10.100" cy="9.950" rx="6.200" ry="4.300" stroke="#a8abaf" stroke-width="1.500"/><circle cx="10.300" cy="10.200" r="1.600" stroke="#a8abaf" stroke-width="1.400"/><path d="M3.600 14.200 14.800 3.200" stroke="#202124" stroke-width="2.200"/><path d="M4.400 15 15.600 4" stroke="#a8abaf" stroke-width="1.500" stroke-linecap="round"/></svg>
<div style="position:absolute;left:0px;top:38px;width:145px;height:45px;background:#2c6ecb;border-radius:8px 8px 0 0;"></div>
<svg style="position:absolute;left:15px;top:49px;" width="22" height="22" viewBox="0 0 22 22" fill="none"><rect x="1.500" y="8" width="19" height="6" rx="1.200" stroke="#cfe0fa" stroke-width="1.600"/><path d="M1.500 5V3a1.500 1.500 0 0 1 1.500-1.500h16a1.500 1.500 0 0 1 1.500 1.500v2M1.500 17v2a1.500 1.500 0 0 0 1.500 1.500h16a1.500 1.500 0 0 0 1.500-1.500v-2" stroke="#cfe0fa" stroke-width="1.600" stroke-dasharray="3.200 2.800"/></svg>
<span class="t" style="left:46.4px;top:47.2px;font-size:25px;line-height:25px;color:#fff;letter-spacing:-0.86px;-webkit-text-stroke:0.5px #fff;">Header</span>
</div>
</body></html>
